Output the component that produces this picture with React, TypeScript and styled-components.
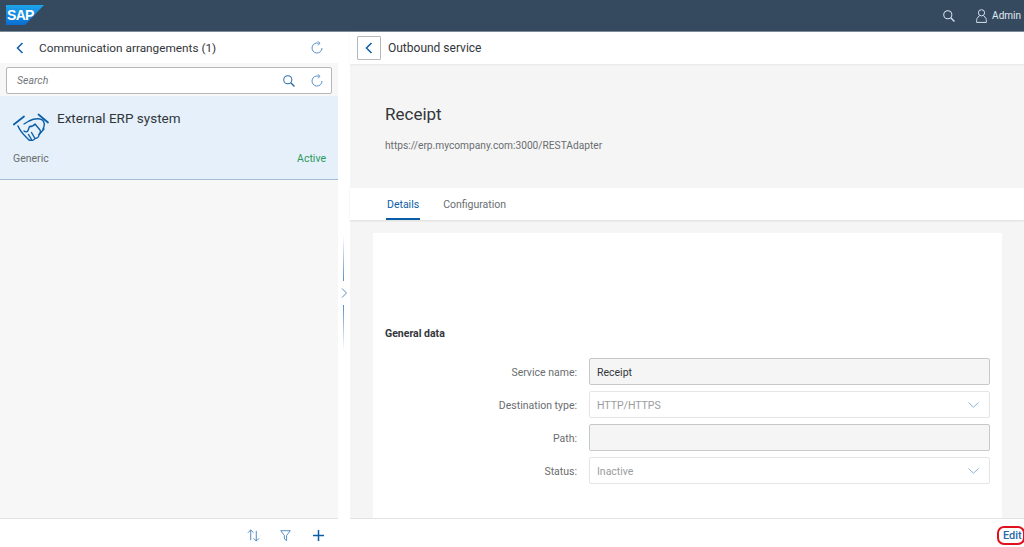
import styled, { createGlobalStyle } from "styled-components";

const GlobalStyle = createGlobalStyle`
  html, body {
    margin: 0;
    padding: 0;
    background: #fff;
    font-family: Roboto, "Noto Sans", "Liberation Sans", sans-serif;
    color: #32363a;
  }
  * { box-sizing: border-box; }
`;

function RefreshIcon() {
  return (
    <svg width="14" height="14" viewBox="0 0 14 14" fill="none" stroke="#5b8fc7" strokeWidth="1">
      <path d="M8.6 2.3A5 5 0 1 0 12 7" />
      <path d="M7.6 0.4 L10 2.2 L8 4.4" />
    </svg>
  );
}

function SearchIcon({ color = "#2a6aa8", size = 12 }: { color?: string; size?: number }) {
  return (
    <svg width={size} height={size} viewBox="0 0 13 13" fill="none" stroke={color} strokeWidth="1.1">
      <circle cx="5.2" cy="5.2" r="4.4" />
      <path d="M8.4 8.4 L12.4 12.4" strokeWidth="1.5" />
    </svg>
  );
}

function BackIcon() {
  return (
    <svg width="8" height="12" viewBox="0 0 8 12" fill="none" stroke="#0a5ea8" strokeWidth="1.5">
      <path d="M6.5 1 L1.5 6 L6.5 11" />
    </svg>
  );
}

function DownIcon() {
  return (
    <svg width="11" height="6" viewBox="0 0 11 6" fill="none" stroke="#8fb3d8" strokeWidth="1">
      <path d="M0.5 0.5 L5.5 5.2 L10.5 0.5" />
    </svg>
  );
}

function HandshakeIcon() {
  return (
    <svg width="36" height="28" viewBox="0 0 36 28" fill="none" stroke="#0a5ea8" strokeWidth="1.4" strokeLinejoin="round" strokeLinecap="round">
      <path d="M0.8 11.5 L11 3.5" strokeWidth="1.7" />
      <path d="M25.5 1.5 L35 9.5" strokeWidth="1.7" />
      <path d="M5 13 C7 18 10 21 13 24 L16 27 C18 28 21 27.5 22 25.5 C24.5 25.5 26 23.5 26 21.5 L31 16" />
      <path d="M11 11 L16 8 C20 6 24 5.5 27 6 C30.5 6.5 32 10 31 13.5 L30 16" />
      <path d="M11 18 C12.5 19.5 14.5 19 15 17.5 L16.5 13.5 C19 13.5 21 12.5 22 11 L27 17 C28 19 27 21 26 21.5" />
      <path d="M18.5 19.5 L22 25.5" />
      <path d="M15.5 21.5 L18.5 26.5" />
    </svg>
  );
}

function PersonIcon() {
  return (
    <svg width="11" height="14" viewBox="0 0 11 14" fill="none" stroke="#d6e3f0" strokeWidth="1">
      <circle cx="5.5" cy="3.8" r="3.1" />
      <path d="M3.4 6.6 L1 9.5 C0.6 10.2 0.6 13.4 0.6 13.4 H10.4 C10.4 13.4 10.4 10.2 10 9.5 L7.6 6.6" />
    </svg>
  );
}

const Page = styled.div`
  width: 1024px;
  height: 547px;
  display: flex;
  flex-direction: column;
  overflow: hidden;
`;

const ShellBar = styled.header`
  height: 32px;
  flex: none;
  background: #354a5f;
  border-bottom: 1px solid #7d8a97;
  display: flex;
  align-items: center;
  padding: 0 3px 0 6px;
`;

const Logo = styled.div`
  width: 38px;
  height: 20px;
  margin-top: -1px;
  background: linear-gradient(180deg, #1ea4ea, #0a6ed1);
  clip-path: polygon(0 0, 100% 0, 50% 100%, 0 100%);
  color: #fff;
  font-family: "Liberation Sans", sans-serif;
  font-weight: 700;
  font-size: 14px;
  letter-spacing: -0.7px;
  line-height: 21px;
  padding-left: 1px;
`;

const ShellActions = styled.div`
  margin-left: auto;
  display: flex;
  align-items: center;
`;

const AdminName = styled.span`
  font-size: 10px;
  color: #e3ebf3;
  margin-left: 5px;
`;

const UserWrap = styled.div`
  display: flex;
  align-items: center;
  margin-left: 21px;
`;

const Body = styled.div`
  flex: 1;
  display: flex;
  min-height: 0;
`;

const MasterPane = styled.section`
  width: 338px;
  flex: none;
  display: flex;
  flex-direction: column;
  background: #f7f7f7;
`;

const PaneBar = styled.div`
  height: 31px;
  flex: none;
  background: #fff;
  display: flex;
  align-items: center;
  padding: 0 14px 0 16px;
`;

const PaneTitle = styled.span`
  font-size: 11.8px;
  margin-left: 15px;
  flex: 1;
`;

const SearchRow = styled.div`
  flex: none;
  height: 33px;
  padding: 4px 6px 2px;
`;

const SearchBox = styled.div`
  height: 27px;
  background: #fff;
  border: 1px solid #b4b8bb;
  border-radius: 2px;
  display: flex;
  align-items: center;
  gap: 15px;
  padding: 0 7px 0 10px;
`;

const SearchHint = styled.span`
  font-size: 10.5px;
  font-style: italic;
  color: #74777a;
  flex: 1;
`;

const ListItem = styled.div`
  height: 84px;
  flex: none;
  background: #e5f0fa;
  border-bottom: 1px solid #a3bdd6;
  padding: 8px 12px 0 13px;
  display: flex;
  flex-direction: column;
`;

const ItemTop = styled.div`
  display: flex;
  gap: 8px;
`;

const ItemIcon = styled.div`
  padding-top: 9px;
  display: flex;
`;

const ItemTitle = styled.span`
  font-size: 13.5px;
  line-height: 19px;
  margin-top: 5px;
`;

const ItemBottom = styled.div`
  display: flex;
  justify-content: space-between;
  font-size: 10.5px;
  margin-top: 11px;
`;

const ItemType = styled.span`
  color: #6a6d70;
`;

const ItemStatus = styled.span`
  color: #2b9a5a;
`;

const ListFill = styled.div`
  flex: 1;
`;

const BarFooter = styled.div`
  height: 29px;
  flex: none;
  background: #fff;
  border-top: 1px solid #e3e3e3;
  display: flex;
  align-items: center;
  justify-content: flex-end;
`;

const MasterFooter = styled(BarFooter)`
  gap: 20px;
  padding-right: 14px;
  padding-top: 4px;
`;

const FilterIcon = styled.svg`
  margin-right: 2px;
`;

const Splitter = styled.div`
  width: 12px;
  flex: none;
  background: #fff;
  display: flex;
  flex-direction: column;
  align-items: center;
  justify-content: center;
  padding-top: 6px;
  gap: 7px;
`;

const SplitLine = styled.div<{ $flip?: boolean }>`
  width: 1px;
  height: 45px;
  margin-left: -1px;
  background: linear-gradient(${(p) => (p.$flip ? "180deg" : "0deg")}, #5b8fc7, rgba(91, 143, 199, 0));
`;

const DetailPane = styled.section`
  flex: 1;
  min-width: 0;
  display: flex;
  flex-direction: column;
  background: #f5f5f5;
`;

const DetailBar = styled.div`
  height: 32px;
  flex: none;
  background: #fff;
  display: flex;
  align-items: center;
  padding-left: 7px;
  gap: 7px;
  box-shadow: 0 1px 2px rgba(0, 0, 0, 0.06);
  z-index: 1;
`;

const BackButton = styled.button`
  width: 24px;
  height: 24px;
  background: #fff;
  border: 1px solid #b4b8bb;
  border-radius: 1px;
  padding: 0;
  display: flex;
  align-items: center;
  justify-content: center;
`;

const DetailBarTitle = styled.span`
  font-size: 12px;
`;

const ObjectHeader = styled.div`
  height: 124px;
  flex: none;
  padding: 38px 0 0 35px;
`;

const ObjectTitle = styled.h1`
  margin: 0;
  font-size: 17px;
  font-weight: 400;
  line-height: 24px;
`;

const ObjectUrl = styled.p`
  margin: 13px 0 0;
  font-size: 10.2px;
  line-height: 14px;
  color: #6a6d70;
`;

const Tabs = styled.nav`
  height: 32px;
  flex: none;
  background: #fff;
  display: flex;
  gap: 22px;
  padding-left: 36px;
  box-shadow: 0 1px 2px rgba(0, 0, 0, 0.1);
  z-index: 1;
`;

const Tab = styled.div<{ $active?: boolean }>`
  font-size: 10.5px;
  line-height: 33px;
  color: ${(p) => (p.$active ? "#0a5ea8" : "#6a6d70")};
  border-bottom: ${(p) => (p.$active ? "2px solid #0a5ea8" : "none")};
  padding: 0 1px;
  height: 32px;
`;

const Content = styled.div`
  flex: 1;
  min-height: 0;
  padding: 13px 22px 0 23px;
  display: flex;
`;

const Card = styled.div`
  flex: 1;
  background: #fff;
  padding: 94px 12px 0;
`;

const SectionTitle = styled.h2`
  margin: 0;
  font-size: 10.5px;
  font-weight: 700;
  line-height: 14px;
  color: #32363a;
`;

const FormGrid = styled.div`
  display: grid;
  grid-template-columns: 192px 1fr;
  column-gap: 12px;
  row-gap: 6px;
  margin-top: 17px;
  align-items: center;
`;

const FieldLabel = styled.label`
  font-size: 10.5px;
  color: #6a6d70;
  text-align: right;
  padding-top: 2px;
`;

const Field = styled.div<{ $readonly?: boolean }>`
  height: 27px;
  border: 1px solid ${(p) => (p.$readonly ? "#c6c8ca" : "#e5e5e5")};
  border-radius: 2px;
  background: ${(p) => (p.$readonly ? "#f5f5f5" : "#fff")};
  color: ${(p) => (p.$readonly ? "#32363a" : "#9a9c9e")};
  font-size: 10.5px;
  display: flex;
  align-items: center;
  justify-content: space-between;
  padding: 1px 10px 0 7px;
`;

const EditFooter = styled(BarFooter)`
  padding-right: 0;
  padding-top: 5px;
`;

const EditButton = styled.span`
  font-size: 11px;
  font-weight: 500;
  line-height: 15px;
  color: #2a6aa8;
  border: 2px solid #e0101e;
  border-radius: 7px;
  padding: 0 0 0 4px;
  height: 19px;
  width: 28px;
  margin-right: -1px;
`;

export default function App() {
  return (
    <Page>
      <GlobalStyle />
      <ShellBar>
        <Logo>SAP</Logo>
        <ShellActions>
          <SearchIcon color="#d6e3f0" />
          <UserWrap>
            <PersonIcon />
            <AdminName>Admin</AdminName>
          </UserWrap>
        </ShellActions>
      </ShellBar>
      <Body>
        <MasterPane>
          <PaneBar>
            <BackIcon />
            <PaneTitle>Communication arrangements (1)</PaneTitle>
            <RefreshIcon />
          </PaneBar>
          <SearchRow>
            <SearchBox>
              <SearchHint>Search</SearchHint>
              <SearchIcon />
              <RefreshIcon />
            </SearchBox>
          </SearchRow>
          <ListItem>
            <ItemTop>
              <ItemIcon>
                <HandshakeIcon />
              </ItemIcon>
              <ItemTitle>External ERP system</ItemTitle>
            </ItemTop>
            <ItemBottom>
              <ItemType>Generic</ItemType>
              <ItemStatus>Active</ItemStatus>
            </ItemBottom>
          </ListItem>
          <ListFill />
          <MasterFooter>
            <svg width="13" height="13" viewBox="0 0 14 14" fill="none" stroke="#4a86c0" strokeWidth="1">
              <path d="M4 12 V1 M1 4 L4 1 L7 4" />
              <path d="M10 2 V13 M7 10 L10 13 L13 10" />
            </svg>
            <FilterIcon width="11" height="11" viewBox="0 0 12 12" fill="none" stroke="#4a86c0" strokeWidth="1">
              <path d="M0.8 0.8 H11.2 L7.2 6 V11.5 L4.8 9.8 V6 Z" />
            </FilterIcon>
            <svg width="11" height="11" viewBox="0 0 11 11" fill="none" stroke="#0a5ea8" strokeWidth="1.5">
              <path d="M5.5 0 V11 M0 5.5 H11" />
            </svg>
          </MasterFooter>
        </MasterPane>
        <Splitter>
          <SplitLine />
          <svg width="7" height="10" viewBox="0 0 7 10" fill="none" stroke="#5b8fc7" strokeWidth="1">
            <path d="M1 0.5 L5.5 5 L1 9.5" />
          </svg>
          <SplitLine $flip />
        </Splitter>
        <DetailPane>
          <DetailBar>
            <BackButton aria-label="Back">
              <BackIcon />
            </BackButton>
            <DetailBarTitle>Outbound service</DetailBarTitle>
          </DetailBar>
          <ObjectHeader>
            <ObjectTitle>Receipt</ObjectTitle>
            <ObjectUrl>https://erp.mycompany.com:3000/RESTAdapter</ObjectUrl>
          </ObjectHeader>
          <Tabs>
            <Tab $active>Details</Tab>
            <Tab>Configuration</Tab>
          </Tabs>
          <Content>
            <Card>
              <SectionTitle>General data</SectionTitle>
              <FormGrid>
                <FieldLabel>Service name:</FieldLabel>
                <Field $readonly>Receipt</Field>
                <FieldLabel>Destination type:</FieldLabel>
                <Field>
                  HTTP/HTTPS
                  <DownIcon />
                </Field>
                <FieldLabel>Path:</FieldLabel>
                <Field $readonly />
                <FieldLabel>Status:</FieldLabel>
                <Field>
                  Inactive
                  <DownIcon />
                </Field>
              </FormGrid>
            </Card>
          </Content>
          <EditFooter>
            <EditButton>Edit</EditButton>
          </EditFooter>
        </DetailPane>
      </Body>
    </Page>
  );
}
